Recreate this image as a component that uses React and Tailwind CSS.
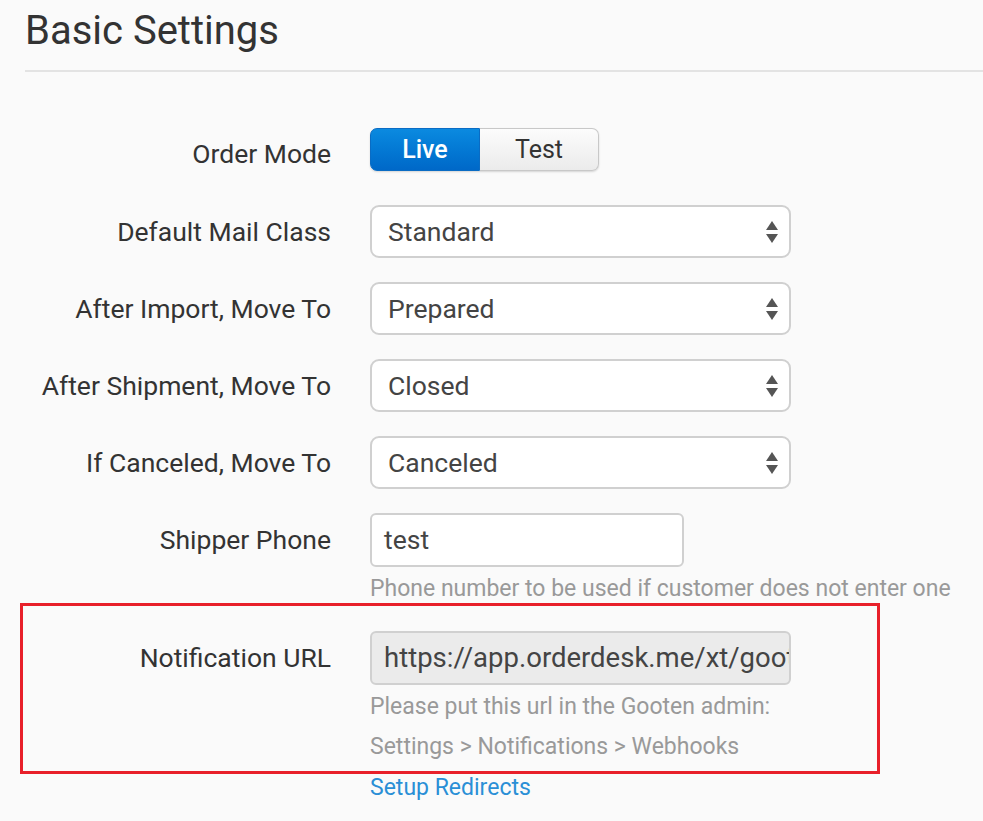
const SELECTS = [
  { label: 'Default Mail Class', value: 'Standard' },
  { label: 'After Import, Move To', value: 'Prepared' },
  { label: 'After Shipment, Move To', value: 'Closed' },
  { label: 'If Canceled, Move To', value: 'Canceled' },
]

function Arrows() {
  return (
    <svg className="w-[14px] h-[24px] text-[#555]" viewBox="0 0 14 24" fill="currentColor">
      <path d="M7 1 L13 10 L1 10 Z" />
      <path d="M1 14 L13 14 L7 23 Z" />
    </svg>
  )
}

function Row({ label, children, labelW = 'w-[331px]', labelClass = '' }) {
  return (
    <div className="flex items-center">
      <div className={`${labelW} ${labelClass} shrink-0 text-right text-[26.5px] text-[#333]`}>{label}</div>
      <div className="ml-[39px]">{children}</div>
    </div>
  )
}

export default function App() {
  return (
    <div className="min-h-screen bg-[#fafafa] font-['Roboto',sans-serif] overflow-hidden">
      {/* Header */}
      <div className="pl-[25px] pt-[8px]">
        <h1 className="text-[40px] leading-[46px] text-[#333] pb-[16px] border-b-2 border-[#e3e3e3]">
          Basic Settings
        </h1>
      </div>

      <div className="pt-[56px]">
        <Row label="Order Mode" labelClass="pt-[8px] leading-[35px]">
          <div className="flex h-[43px] w-[229px] rounded-[7px] shadow-[0_1px_2px_rgba(0,0,0,0.15)]">
            <button className="w-[110px] rounded-l-[7px] bg-gradient-to-b from-[#0b8ae0] to-[#0068c8] border border-[#0a6cc4] text-white text-[25px] font-medium">
              Live
            </button>
            <button className="flex-1 rounded-r-[7px] bg-gradient-to-b from-[#fcfcfc] to-[#ebebeb] border border-l-0 border-[#c8c8c8] text-[#333] text-[25px]">
              Test
            </button>
          </div>
        </Row>

        <div className="flex flex-col gap-[24px] mt-[34px]">
          {SELECTS.map((s) => (
            <Row key={s.label} label={s.label}>
              <div className="flex items-center justify-between w-[421px] h-[53px] bg-white border-2 border-[#d0d0d0] rounded-[9px] pl-[16px] pr-[10px]">
                <span className="text-[26.5px] text-[#444]">{s.value}</span>
                <Arrows />
              </div>
            </Row>
          ))}

          <Row label="Shipper Phone">
            <div className="flex items-center w-[314px] h-[54px] bg-white border-2 border-[#d0d0d0] rounded-[6px] pl-[12px]">
              <span className="text-[26.5px] text-[#444]">test</span>
            </div>
          </Row>
        </div>

        <p className="ml-[370px] mt-[8px] text-[23px] leading-[28px] text-[#999] whitespace-nowrap">
          Phone number to be used if customer does not enter one
        </p>

        {/* Highlighted notification block */}
        <div className="ml-[20px] w-[860px] border-[3px] border-[#e8202a] pt-[25px] pb-[4px]">
          <Row label="Notification URL" labelW="w-[308px]">
            <div className="flex items-center w-[421px] h-[54px] bg-[#ebebeb] border-2 border-[#d0d0d0] rounded-[6px] pl-[12px] overflow-hidden whitespace-nowrap">
              <span className="text-[27.5px] text-[#444]">https://app.orderdesk.me/xt/gooten</span>
            </div>
          </Row>
          <div className="ml-[347px] mt-[2px] text-[23px] leading-[40px] text-[#999]">
            <p>Please put this url in the Gooten admin:</p>
            <p>Settings &gt; Notifications &gt; Webhooks</p>
          </div>
        </div>

        <a className="block ml-[370px] text-[23px] leading-[28px] text-[#2a8fd6]" href="#">
          Setup Redirects
        </a>
      </div>
    </div>
  )
}
